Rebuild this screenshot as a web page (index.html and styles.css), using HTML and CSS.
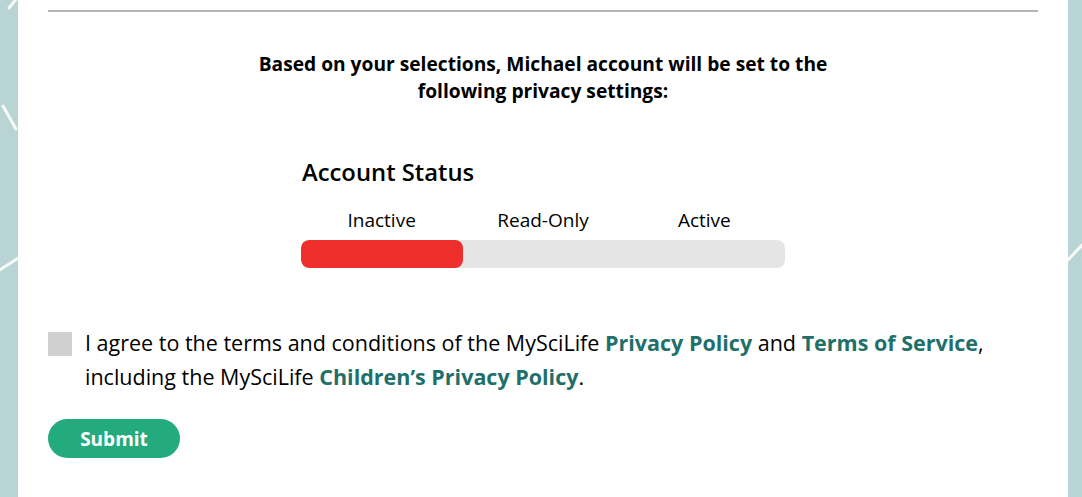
FILE: index.html
```html
<!DOCTYPE html>
<html lang="en">
<head>
<meta charset="utf-8">
<title>Privacy settings</title>
<link rel="stylesheet" href="styles.css">
</head>
<body>
<svg class="bg-lines" width="1082" height="497" viewBox="0 0 1082 497" aria-hidden="true">
  <g stroke="#ffffff" stroke-width="3" stroke-linecap="round" opacity="0.9">
    <line x1="9" y1="8" x2="17" y2="-2"/>
    <line x1="3" y1="106" x2="16" y2="129"/>
    <line x1="-2" y1="271" x2="20" y2="257"/>
    <line x1="1066" y1="262" x2="1084" y2="243"/>
  </g>
</svg>
<main class="card">
  <hr class="rule">
  <p class="intro">Based on your selections, Michael account will be set to the following privacy settings:</p>
  <section class="status">
    <h2 class="status-title">Account Status</h2>
    <div class="status-labels">
      <span>Inactive</span>
      <span>Read-Only</span>
      <span>Active</span>
    </div>
    <div class="status-bar"><div class="status-fill"></div></div>
  </section>
  <label class="agree">
    <span class="checkbox"></span>
    <span class="agree-text">I agree to the terms and conditions of the MySciLife <a href="#">Privacy Policy</a> and <a href="#">Terms of Service</a>, including the MySciLife <a href="#">Children’s Privacy Policy</a>.</span>
  </label>
  <button class="submit" type="button">Submit</button>
</main>
</body>
</html>
```

FILE: styles.css
```css
html, body {
  margin: 0;
  padding: 0;
}
body {
  background: #b9d4d4;
  font-family: "Open Sans", "Noto Sans", sans-serif;
  color: #000;
  height: 497px;
  overflow: hidden;
  position: relative;
}
.bg-lines {
  position: absolute;
  left: 0;
  top: 0;
}
.card {
  position: relative;
  background: #ffffff;
  margin: 0 14px 0 18px;
  height: 497px;
  padding: 10px 30px 0;
  box-sizing: border-box;
  display: flex;
  flex-direction: column;
}
.rule {
  margin: 0;
  border: 0;
  border-top: 2px solid #b5b5b5;
  height: 0;
}
.intro {
  margin: 38px auto 0;
  max-width: 620px;
  text-align: center;
  font-weight: 700;
  font-size: 19.2px;
  line-height: 27px;
}
.status {
  width: 484px;
  margin: 53px auto 0;
}
.status-title {
  margin: 0 0 0 1px;
  font-size: 23.8px;
  font-weight: 600;
  line-height: 30px;
}
.status-labels {
  margin-top: 21px;
  display: grid;
  grid-template-columns: 1fr 1fr 1fr;
  text-align: center;
  font-size: 19px;
  line-height: 24px;
}
.status-bar {
  margin-top: 8px;
  height: 28px;
  border-radius: 8px;
  background: #e5e5e5;
  overflow: hidden;
}
.status-fill {
  width: 162px;
  height: 100%;
  background: #ee2f2b;
  border-radius: 8px;
}
.agree {
  margin-top: 58px;
  display: flex;
  align-items: flex-start;
  gap: 13px;
  font-size: 21.5px;
  line-height: 34px;
}
.checkbox {
  flex: none;
  width: 24px;
  height: 24px;
  margin-top: 6px;
  background: #d0d0d0;
}
.agree-text a {
  color: #1e706a;
  font-weight: 700;
  text-decoration: none;
}
.submit {
  margin-top: 25px;
  align-self: flex-start;
  width: 132px;
  height: 39px;
  border: 0;
  border-radius: 20px;
  background: #23ab7e;
  color: #ffffff;
  font-family: "Open Sans", "Noto Sans", sans-serif;
  font-weight: 700;
  font-size: 19px;
  padding: 0;
  cursor: pointer;
}
```
